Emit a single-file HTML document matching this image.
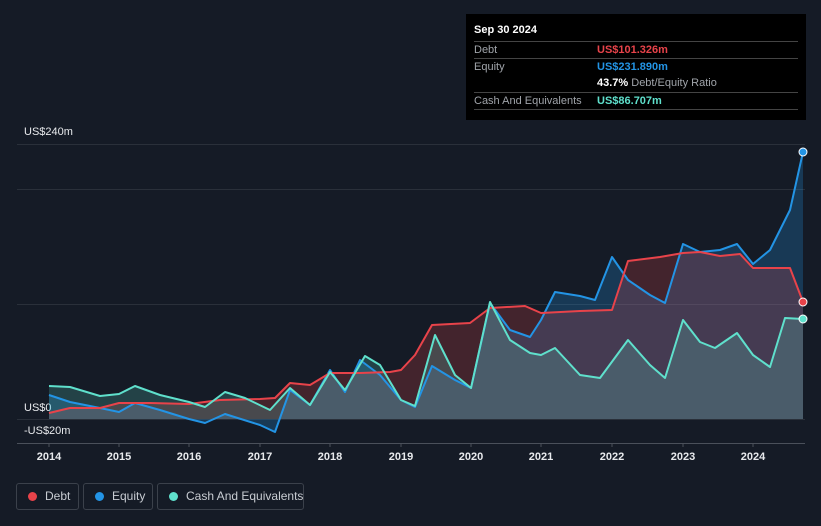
<!DOCTYPE html><html><head><style>
body{margin:0;width:821px;height:526px;background:#151b26;font-family:"Liberation Sans",sans-serif;overflow:hidden;position:relative}
.tt{position:absolute;left:466px;top:14px;width:340px;height:106px;background:#000;color:#fff;font-size:11px}
.row{position:absolute;left:8px;right:8px;border-top:1px solid #444;height:17px}
.row span{position:absolute;top:2px;white-space:nowrap}
.lab{left:0;color:#a0a4aa}.val{left:123px;font-weight:bold}
.leg{position:absolute;top:483px;height:27px;border:1px solid #3b414b;border-radius:3px;color:#c8ccd2;font-size:12px;box-sizing:border-box;line-height:25px;white-space:nowrap}
.leg i{position:absolute;left:11px;top:8px;width:9px;height:9px;border-radius:50%}
.ax{position:absolute;color:#e8eaed;font-size:11px}
</style></head><body>
<div class="tt">
<div style="position:absolute;left:8px;top:10px;font-weight:bold">Sep 30 2024</div>
<div class="row" style="top:27px"><span class="lab">Debt</span><span class="val" style="color:#e8434a">US$101.326m</span></div>
<div class="row" style="top:44px"><span class="lab">Equity</span><span class="val" style="color:#2394e5">US$231.890m</span></div>
<div class="row" style="top:61px;border-top:none"><span class="val" style="color:#fff">43.7% <b style="font-weight:normal;color:#a0a4aa">Debt/Equity Ratio</b></span></div>
<div class="row" style="top:78px"><span class="lab">Cash And Equivalents</span><span class="val" style="color:#5fe0cc">US$86.707m</span></div>
<div class="row" style="top:95px;height:0"></div>
</div>
<div class="ax" style="left:24px;top:126px">US$240m</div>
<div class="ax" style="left:24px;top:402px">US$0</div>
<div class="ax" style="left:24px;top:425px">-US$20m</div>
<svg width="821" height="526" style="position:absolute;left:0;top:0">
<g stroke="#2a303a" stroke-width="1"><line x1="17" y1="144.5" x2="805" y2="144.5"/><line x1="17" y1="189.5" x2="805" y2="189.5"/><line x1="17" y1="304.5" x2="805" y2="304.5"/><line x1="17" y1="419.5" x2="805" y2="419.5"/></g>
<line x1="17" y1="443.5" x2="805" y2="443.5" stroke="#4a505a"/>
<g stroke="#4a505a"><line x1="49" y1="443" x2="49" y2="447"/><line x1="119" y1="443" x2="119" y2="447"/><line x1="189" y1="443" x2="189" y2="447"/><line x1="260" y1="443" x2="260" y2="447"/><line x1="330" y1="443" x2="330" y2="447"/><line x1="401" y1="443" x2="401" y2="447"/><line x1="471" y1="443" x2="471" y2="447"/><line x1="541" y1="443" x2="541" y2="447"/><line x1="612" y1="443" x2="612" y2="447"/><line x1="683" y1="443" x2="683" y2="447"/><line x1="753" y1="443" x2="753" y2="447"/></g>
<g fill="#e8eaed" font-size="11" font-weight="bold" text-anchor="middle"><text x="49" y="460">2014</text><text x="119" y="460">2015</text><text x="189" y="460">2016</text><text x="260" y="460">2017</text><text x="330" y="460">2018</text><text x="401" y="460">2019</text><text x="471" y="460">2020</text><text x="541" y="460">2021</text><text x="612" y="460">2022</text><text x="683" y="460">2023</text><text x="753" y="460">2024</text></g>
<polygon fill="#2394e5" opacity="0.25" points="49,419 49,395 70,402 100,408 119,412 135,403 160,410 189,419 205,423 225,414 260,425 275,432 290,390 310,405 330,370 345,392 360,360 380,375 401,400 415,407 432,366 455,380 471,388 490,303 510,330 530,337 541,320 555,292 580,296 595,300 612,257 628,280 650,295 665,303 683,244 700,252 720,250 737,244 753,264 770,250 790,210 803,152 803,419"/>
<polygon fill="#e8434a" opacity="0.22" points="49,419 49,413 70,408 100,408 119,403 150,403 189,404 220,400 260,399 275,398 290,383 310,385 330,373 360,373 390,372 401,370 415,355 432,325 470,323 490,308 525,306 541,313 580,311 612,310 628,261 660,257 683,253 700,252 720,256 740,254 753,268 790,268 803,302 803,419"/>
<polygon fill="#5fe0cc" opacity="0.2" points="49,419 49,386 70,387 100,396 119,394 135,386 160,395 189,402 205,407 225,392 245,398 270,410 290,388 310,405 330,372 345,390 365,356 380,365 401,400 415,406 435,335 455,375 471,388 490,302 510,340 530,353 541,355 555,348 580,375 600,378 628,340 650,365 665,378 683,320 700,342 715,348 737,333 753,355 770,367 785,318 803,319 803,419"/>
<g fill="none" stroke-width="2" stroke-linejoin="round">
<polyline stroke="#2394e5" points="49,395 70,402 100,408 119,412 135,403 160,410 189,419 205,423 225,414 260,425 275,432 290,390 310,405 330,370 345,392 360,360 380,375 401,400 415,407 432,366 455,380 471,388 490,303 510,330 530,337 541,320 555,292 580,296 595,300 612,257 628,280 650,295 665,303 683,244 700,252 720,250 737,244 753,264 770,250 790,210 803,152"/>
<polyline stroke="#e8434a" points="49,413 70,408 100,408 119,403 150,403 189,404 220,400 260,399 275,398 290,383 310,385 330,373 360,373 390,372 401,370 415,355 432,325 470,323 490,308 525,306 541,313 580,311 612,310 628,261 660,257 683,253 700,252 720,256 740,254 753,268 790,268 803,302"/>
<polyline stroke="#5fe0cc" points="49,386 70,387 100,396 119,394 135,386 160,395 189,402 205,407 225,392 245,398 270,410 290,388 310,405 330,372 345,390 365,356 380,365 401,400 415,406 435,335 455,375 471,388 490,302 510,340 530,353 541,355 555,348 580,375 600,378 628,340 650,365 665,378 683,320 700,342 715,348 737,333 753,355 770,367 785,318 803,319"/>
</g>
<circle cx="803" cy="152" r="4" fill="#2394e5" stroke="#fff" stroke-width="1"/>
<circle cx="803" cy="302" r="4" fill="#e8434a" stroke="#fff" stroke-width="1"/>
<circle cx="803" cy="319" r="4" fill="#5fe0cc" stroke="#fff" stroke-width="1"/>
</svg>
<div class="leg" style="left:16px;width:63px"><i style="background:#e8434a"></i><span style="position:absolute;left:28px">Debt</span></div>
<div class="leg" style="left:83px;width:70px"><i style="background:#2394e5"></i><span style="position:absolute;left:28px">Equity</span></div>
<div class="leg" style="left:157px;width:147px"><i style="background:#5fe0cc"></i><span style="position:absolute;left:28px">Cash And Equivalents</span></div>
</body></html>
